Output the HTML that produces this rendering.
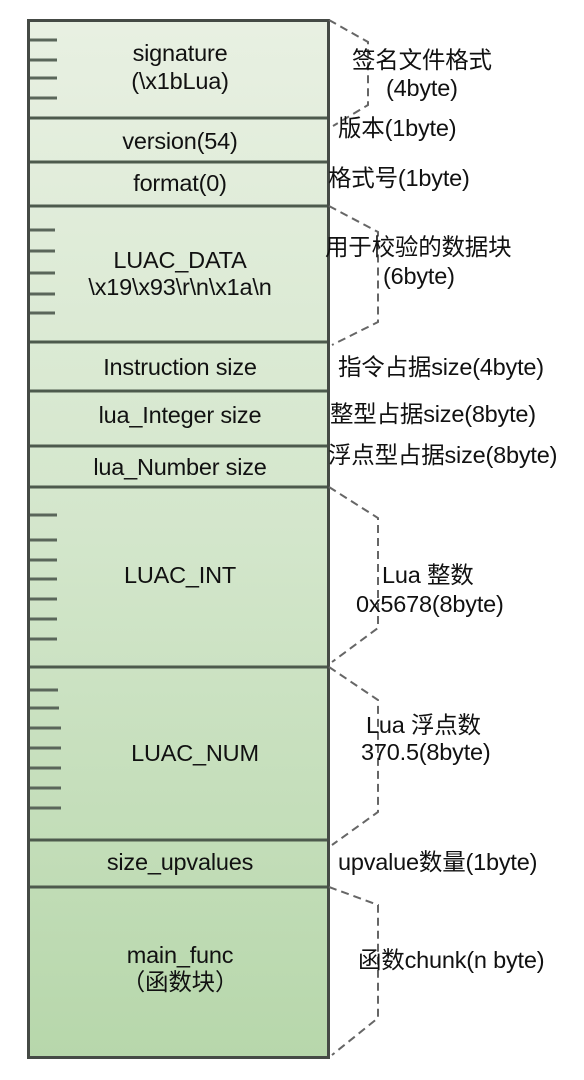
<!DOCTYPE html>
<html><head><meta charset="utf-8"><style>
body{margin:0;width:584px;height:1080px;background:#fff;position:relative;overflow:hidden;font-family:"Liberation Sans","Noto Sans CJK SC",sans-serif;color:#111}
.box{position:absolute;left:27px;top:19px;width:297px;height:1034px;border:3px solid #454a45;background:linear-gradient(#e8f0e2,#d3e6cb 50%,#b7d7ab)}
.t{position:absolute;font-size:23.5px;line-height:26px;white-space:nowrap;letter-spacing:-0.2px}
.c{text-align:center;width:300px;left:30px}
svg{position:absolute;left:0;top:0}
</style></head><body>
<div class="box"></div>
<svg width="584" height="1080">
<g stroke="#4d5a4d" stroke-width="3">
<line x1="30" x2="327" y1="118" y2="118"/><line x1="30" x2="327" y1="162" y2="162"/>
<line x1="30" x2="327" y1="206" y2="206"/><line x1="30" x2="327" y1="342" y2="342"/>
<line x1="30" x2="327" y1="391" y2="391"/><line x1="30" x2="327" y1="446" y2="446"/>
<line x1="30" x2="327" y1="487" y2="487"/><line x1="30" x2="327" y1="667" y2="667"/>
<line x1="30" x2="327" y1="840" y2="840"/><line x1="30" x2="327" y1="887" y2="887"/>
</g>
<g stroke="#5a665a" stroke-width="3">
<line x1="30" x2="57" y1="40" y2="40"/><line x1="30" x2="57" y1="60" y2="60"/><line x1="30" x2="57" y1="78" y2="78"/><line x1="30" x2="57" y1="98" y2="98"/>
<line x1="30" x2="55" y1="230" y2="230"/><line x1="30" x2="55" y1="251" y2="251"/><line x1="30" x2="55" y1="273" y2="273"/><line x1="30" x2="55" y1="294" y2="294"/><line x1="30" x2="55" y1="313" y2="313"/>
<line x1="30" x2="57" y1="515" y2="515"/><line x1="30" x2="57" y1="540" y2="540"/><line x1="30" x2="57" y1="560" y2="560"/><line x1="30" x2="57" y1="579" y2="579"/><line x1="30" x2="57" y1="599" y2="599"/><line x1="30" x2="57" y1="619" y2="619"/><line x1="30" x2="57" y1="639" y2="639"/>
<line x1="30" x2="58" y1="690" y2="690"/><line x1="30" x2="59" y1="708" y2="708"/><line x1="30" x2="61" y1="728" y2="728"/><line x1="30" x2="61" y1="748" y2="748"/><line x1="30" x2="61" y1="768" y2="768"/><line x1="30" x2="61" y1="788" y2="788"/><line x1="30" x2="61" y1="808" y2="808"/>
</g>
<g fill="none" stroke="#666" stroke-width="2" stroke-dasharray="8,5">
<path d="M329 20 L368 42 L368 105 L333 126"/>
<path d="M329 206 L378 232 L378 322 L332 345"/>
<path d="M329 487 L378 518 L378 628 L332 662"/>
<path d="M329 667 L378 700 L378 812 L332 845"/>
<path d="M329 887 L378 905 L378 1018 L332 1055"/>
</g>
</svg>
<div class="t c" style="top:40px">signature</div>
<div class="t c" style="top:68px">(\x1bLua)</div>
<div class="t c" style="top:128px">version(54)</div>
<div class="t c" style="top:170px">format(0)</div>
<div class="t c" style="top:247px">LUAC_DATA</div>
<div class="t c" style="top:274px">\x19\x93\r\n\x1a\n</div>
<div class="t c" style="top:354px">Instruction size</div>
<div class="t c" style="top:402px">lua_Integer size</div>
<div class="t c" style="top:454px">lua_Number size</div>
<div class="t c" style="top:562px">LUAC_INT</div>
<div class="t c" style="top:740px;left:45px">LUAC_NUM</div>
<div class="t c" style="top:849px">size_upvalues</div>
<div class="t c" style="top:942px">main_func</div>
<div class="t c" style="top:969px">（函数块）</div>
<div class="t" style="left:352px;top:47px">签名文件格式</div>
<div class="t" style="left:386px;top:75px">(4byte)</div>
<div class="t" style="left:338px;top:115px">版本(1byte)</div>
<div class="t" style="left:328px;top:165px">格式号(1byte)</div>
<div class="t" style="left:325px;top:234px">用于校验的数据块</div>
<div class="t" style="left:383px;top:263px">(6byte)</div>
<div class="t" style="left:338px;top:354px">指令占据size(4byte)</div>
<div class="t" style="left:330px;top:401px">整型占据size(8byte)</div>
<div class="t" style="left:328px;top:442px">浮点型占据size(8byte)</div>
<div class="t" style="left:382px;top:562px">Lua 整数</div>
<div class="t" style="left:356px;top:591px">0x5678(8byte)</div>
<div class="t" style="left:366px;top:712px">Lua 浮点数</div>
<div class="t" style="left:361px;top:739px">370.5(8byte)</div>
<div class="t" style="left:338px;top:849px">upvalue数量(1byte)</div>
<div class="t" style="left:358px;top:947px">函数chunk(n byte)</div>
</body></html>
